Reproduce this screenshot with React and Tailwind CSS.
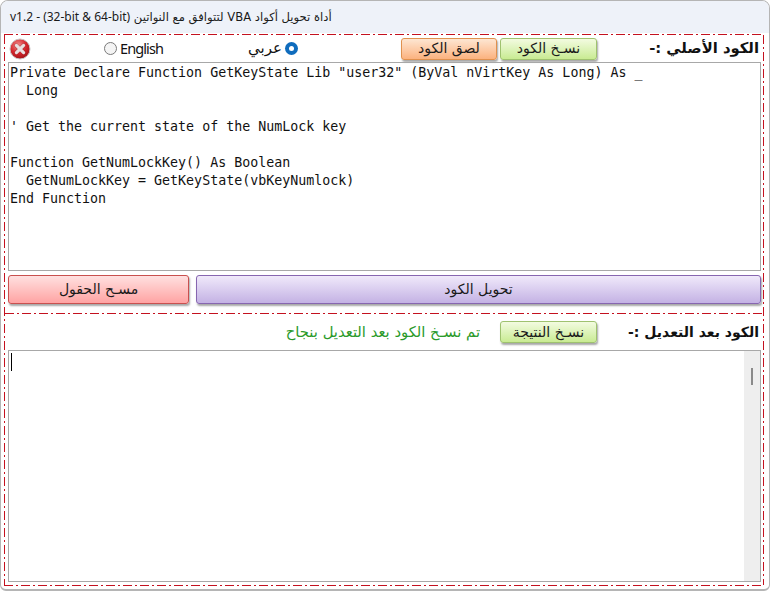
import React from 'react'

const ui = 'font-["Noto_Sans","DejaVu_Sans",sans-serif]'
const arabic = 'font-["DejaVu_Sans",sans-serif]'

const DashH = () => (
  <div className="h-px shrink-0 bg-[repeating-linear-gradient(90deg,#c4111f_0_9px,transparent_9px_12px,#c4111f_12px_14px,transparent_14px_17px)]" />
)
const DashV = () => (
  <div className="w-px shrink-0 bg-[repeating-linear-gradient(180deg,#c4111f_0_9px,transparent_9px_12px,#c4111f_12px_14px,transparent_14px_17px)]" />
)

const GlossButton = ({ className, children }) => (
  <button className={`flex items-center justify-center rounded-[3px] border text-[#1a1a1a] text-[14px] shadow-[1px_2px_2px_rgba(0,0,0,0.35)] ${arabic} ${className}`} dir="rtl">
    {children}
  </button>
)

const green = 'w-[97px] h-[22px] border-[#9fc26f] bg-gradient-to-b from-[#f3fbe0] to-[#c9eb92]'

const CloseIcon = () => (
  <svg width="22" height="22" viewBox="0 0 22 22" className="shrink-0">
    <defs>
      <radialGradient id="redBall" cx="40%" cy="30%" r="75%">
        <stop offset="0%" stopColor="#f08a8a" />
        <stop offset="55%" stopColor="#d4262c" />
        <stop offset="100%" stopColor="#9c1216" />
      </radialGradient>
    </defs>
    <circle cx="11" cy="11" r="10" fill="url(#redBall)" stroke="#c9c3c3" strokeWidth="1" />
    <path d="M7.4 7.4 L14.6 14.6 M14.6 7.4 L7.4 14.6" stroke="#8f2a2c" strokeWidth="4.2" strokeLinecap="round" opacity="0.5" />
    <path d="M7.4 7.4 L14.6 14.6 M14.6 7.4 L7.4 14.6" stroke="#e9dfdf" strokeWidth="3.2" strokeLinecap="round" />
  </svg>
)

const Radio = ({ checked }) =>
  checked ? (
    <span className="w-[13px] h-[13px] rounded-full bg-[#0f6cbd] flex items-center justify-center shrink-0">
      <span className="w-[5px] h-[5px] rounded-full bg-white" />
    </span>
  ) : (
    <span className="w-[13px] h-[13px] rounded-full border border-[#7a7a7a] bg-[#f4f4f4] shrink-0" />
  )

const Heading = ({ className, children }) => (
  <div className="w-[162px] flex justify-end shrink-0">
    <span dir="rtl" className={`font-bold text-[#111] whitespace-nowrap ${arabic} ${className}`}>
      {children}
    </span>
  </div>
)

const code = `Private Declare Function GetKeyState Lib "user32" (ByVal nVirtKey As Long) As _
  Long

' Get the current state of the NumLock key

Function GetNumLockKey() As Boolean
  GetNumLockKey = GetKeyState(vbKeyNumlock)
End Function`

export default function App() {
  return (
    <div className={`w-[770px] h-[591px] flex flex-col bg-white border border-[#b5b5b5] border-b-2 rounded-t-[8px] rounded-b-[6px] overflow-hidden ${ui}`}>
      {/* title bar */}
      <div className="h-[32px] bg-[#eef2f9] flex items-center pl-[9px] shrink-0">
        <span dir="rtl" className={`text-[11.6px] text-[#1a1a1a] whitespace-nowrap ${arabic}`}>
          أداة تحويل أكواد VBA لتتوافق مع النواتين <span dir="ltr" className={`text-[12px] ${ui}`}>v1.2 - (32-bit &amp; 64-bit)</span>
        </span>
      </div>

      {/* main frame */}
      <div className="flex-1 ml-[3px] mr-[5px] mt-px mb-[3px] flex flex-col min-h-0">
        <DashH />
        <div className="flex-1 flex min-h-0">
          <DashV />
          <div className="flex-1 flex flex-col min-w-0 pl-[3px] pr-[2px]">
            {/* source toolbar */}
            <div className="h-[27px] flex items-center pl-[1px] pr-[2px] shrink-0">
              <CloseIcon />
              <label className="ml-[73px] flex items-center gap-[3px] text-[14.5px] tracking-[-0.9px] text-[#111]">
                <Radio />
                English
              </label>
              <label className={`ml-[85px] flex items-center gap-[3px] text-[15px] text-[#111] ${arabic}`}>
                <span dir="rtl">عربي</span>
                <Radio checked />
              </label>
              <GlossButton className="ml-[103px] w-[96px] h-[22px] border-[#e0914e] bg-gradient-to-b from-[#fde6d2] to-[#fbb27e]">لصق الكود</GlossButton>
              <GlossButton className={`ml-[3px] ${green}`}>نسـخ الكود</GlossButton>
              <div className="ml-auto"><Heading className="text-[14.8px]">الكود الأصلي :-</Heading></div>
            </div>

            {/* source code */}
            <pre className='h-[209px] shrink-0 border border-[#a8a8a8] pl-[1px] pt-px font-["DejaVu_Sans_Mono",monospace] text-[13.3px] leading-[18px] text-[#111] overflow-hidden'>
              {code}
            </pre>

            {/* actions */}
            <div className="flex gap-[7px] mt-[4px] h-[29px] shrink-0">
              <GlossButton className="w-[181px] border-[#c9504f] bg-gradient-to-b from-[#ffe0e0] to-[#ffa3a3]">مسـح الحقول</GlossButton>
              <GlossButton className="flex-1 border-[#8766b0] bg-gradient-to-b from-[#f0e9fa] to-[#c4b2e4]">تحويل الكود</GlossButton>
            </div>

            <div className="-ml-[3px] -mr-[2px] mt-[9px]"><DashH /></div>

            {/* result toolbar */}
            <div className="h-[36px] flex items-center justify-end pr-[2px] shrink-0">
              <span dir="rtl" className={`text-[14.8px] text-[#2a9a2a] whitespace-nowrap ${arabic}`}>تم نسـخ الكود بعد التعديل بنجاح</span>
              <GlossButton className={`ml-[20px] ${green}`}>نسـخ النتيجة</GlossButton>
              <Heading className="text-[14px] pt-px">الكود بعد التعديل :-</Heading>
            </div>

            {/* result */}
            <div className="flex-1 border border-[#a8a8a8] flex min-h-0">
              <div className="flex-1 pl-[1px]">
                <div className="w-[2px] h-[18px] border-l border-black ml-[1px] mt-[2px]" />
              </div>
              <div className="w-[16px] bg-[#eeeeee] pt-[17px] flex justify-center">
                <div className="w-[2px] h-[17px] bg-[#8a8a8a]" />
              </div>
            </div>
            <div className="h-[3px] shrink-0" />
          </div>
          <DashV />
        </div>
        <DashH />
      </div>
    </div>
  )
}
